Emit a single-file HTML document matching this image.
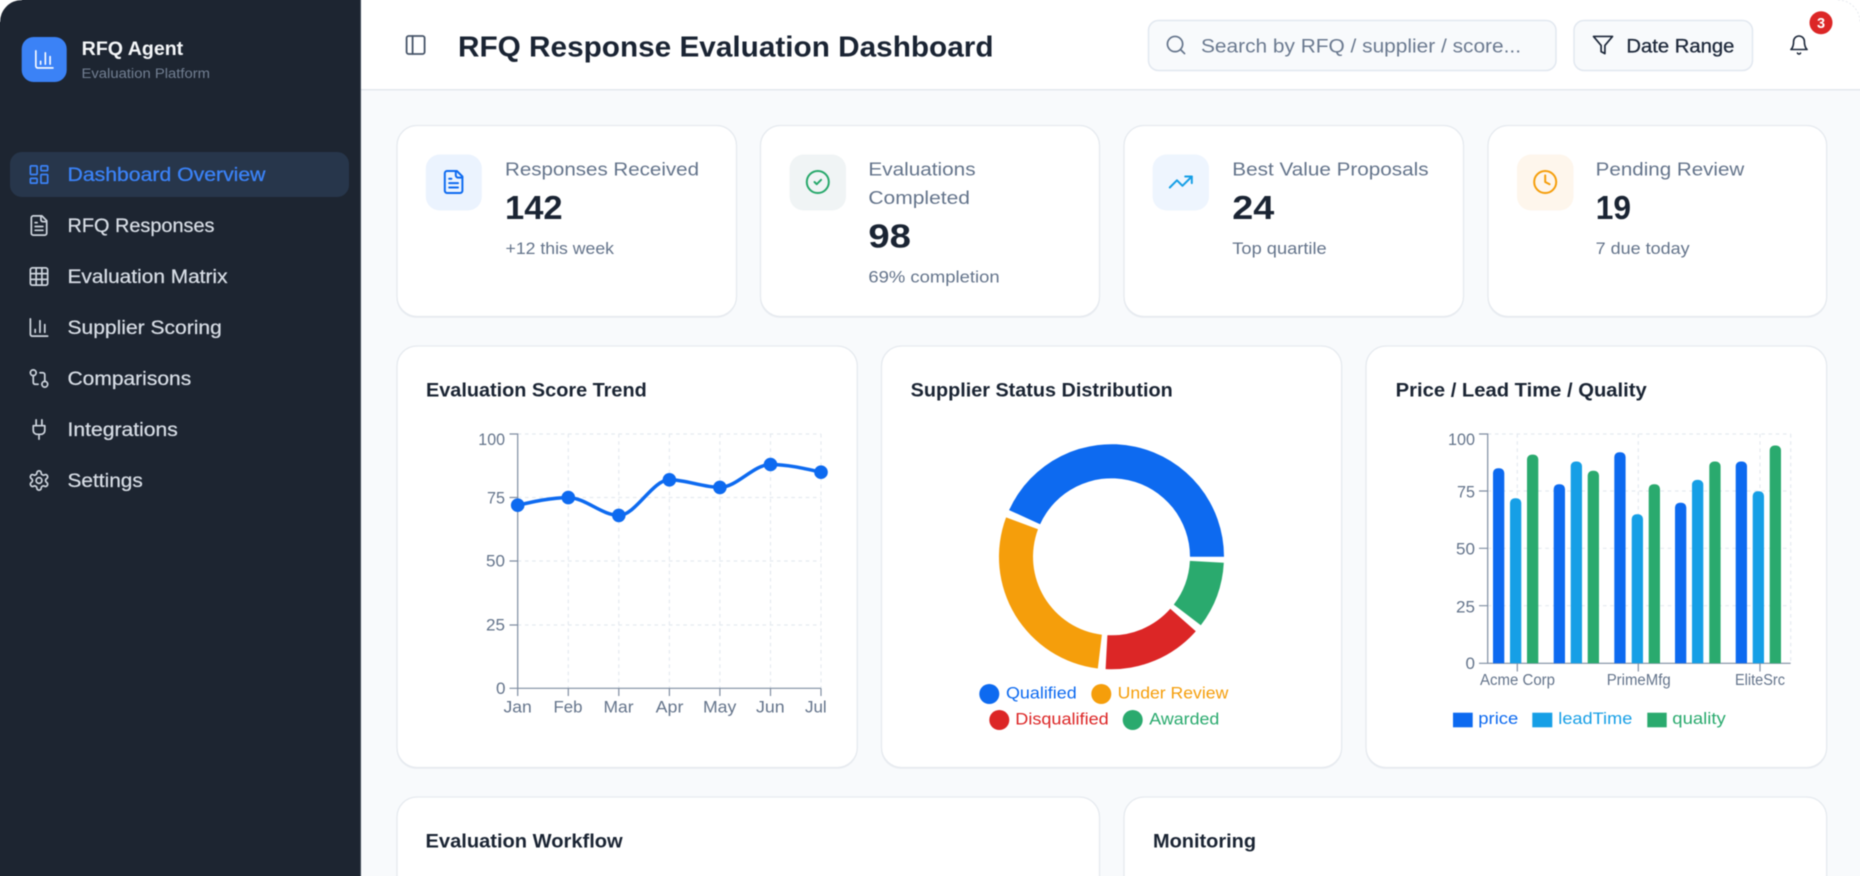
<!DOCTYPE html>
<html lang="en">
<head>
<meta charset="utf-8">
<title>RFQ Response Evaluation Dashboard</title>
<style>
html,body{margin:0;padding:0;background:#fff;width:1860px;height:876px;overflow:hidden}
#page{position:relative;width:1860px;height:876px;overflow:hidden;contain:paint}
svg{display:block;position:absolute;left:-10px;top:-10px;filter:blur(.4px)}
text{font-family:"Liberation Sans",Arial,sans-serif;white-space:pre}
.b{font-weight:700}
.ic{fill:none;stroke-linecap:round;stroke-linejoin:round;stroke-width:1.8}
.card{fill:#fff;stroke:#e6eaef;stroke-width:1.3}
.sh{fill:#eceff3}
.grid{stroke:#e5eaf0;stroke-width:1.2;stroke-dasharray:3.6 3.6;fill:none}
.axis{stroke:#7f8da1;stroke-width:1.2;fill:none}
.t{fill:#64748b;font-size:17px}
</style>
</head>
<body>
<div id="page">
<svg width="1880" height="896" viewBox="-10 -10 1880 896" xmlns="http://www.w3.org/2000/svg">
<defs>
<clipPath id="frame"><path d="M22 -20H1880V900H-20V22H0A22 22 0 0 1 22 0Z"/></clipPath>
<g id="i-chart"><path d="M3 3v16a2 2 0 0 0 2 2h16"/><path d="M18 17V9"/><path d="M13 17V5"/><path d="M8 17v-3"/></g>
<g id="i-file"><path d="M15 2H6a2 2 0 0 0-2 2v16a2 2 0 0 0 2 2h12a2 2 0 0 0 2-2V7Z"/><path d="M14 2v4a2 2 0 0 0 2 2h4"/><path d="M10 9H8"/><path d="M16 13H8"/><path d="M16 17H8"/></g>
</defs>
<g clip-path="url(#frame)">
<rect x="361" y="-20" width="1519" height="920" fill="#f8fafc"/>

<!-- Header -->
<rect x="361" y="-20" width="1519" height="109.5" fill="#fff"/>
<rect x="361" y="89" width="1519" height="1.5" fill="#e4e8ee"/>
<g class="ic" stroke="#475569" transform="translate(403.6 33)"><rect x="3" y="3" width="18" height="18" rx="2"/><path d="M9 3v18"/></g>
<text class="b" x="458" y="56.5" font-size="28.5" fill="#1a2433" textLength="535.5" lengthAdjust="spacingAndGlyphs">RFQ Response Evaluation Dashboard</text>

<rect x="1148.5" y="20.5" width="407.5" height="50" rx="10" fill="#f8fafc" stroke="#e2e8f0" stroke-width="1.5"/>
<g class="ic" stroke="#64748b" transform="translate(1164.6 33.6) scale(.95)"><circle cx="11" cy="11" r="8"/><path d="m21 21-4.3-4.3"/></g>
<text x="1201" y="52.5" font-size="19" fill="#6b7a90" textLength="320" lengthAdjust="spacingAndGlyphs">Search by RFQ / supplier / score...</text>

<rect x="1574" y="20.5" width="178.5" height="50" rx="10" fill="#f8fafc" stroke="#e2e8f0" stroke-width="1.5"/>
<g class="ic" stroke="#1e293b" transform="translate(1591.6 33.6) scale(.95)"><polygon points="22 3 2 3 10 12.46 10 19 14 21 14 12.46 22 3"/></g>
<text x="1626.4" y="52.5" font-size="19" fill="#1e293b" stroke="#1e293b" stroke-width=".3" textLength="108" lengthAdjust="spacingAndGlyphs">Date Range</text>

<g class="ic" stroke="#1e293b" transform="translate(1788.2 34.2) scale(.9)"><path d="M6 8a6 6 0 0 1 12 0c0 7 3 9 3 9H3s3-2 3-9"/><path d="M10.3 21a1.94 1.94 0 0 0 3.4 0"/></g>
<circle cx="1821" cy="22.7" r="11.5" fill="#dc2626"/>
<text class="b" x="1821" y="28" font-size="14.5" fill="#fff" text-anchor="middle">3</text>

<!-- Stat cards -->
<g>
<rect class="sh" x="396.5" y="127" width="340" height="191" rx="20"/>
<rect class="card" x="397" y="125.5" width="339.5" height="191" rx="20"/>
<rect x="425.8" y="154.5" width="56" height="56" rx="14" fill="#ebf3fe"/>
<g class="ic" stroke="#0d6af0" transform="translate(440.4 168.8) scale(1.1)"><use href="#i-file"/></g>
<text x="505" y="175.7" font-size="18.5" fill="#64748b" textLength="194" lengthAdjust="spacingAndGlyphs">Responses Received</text>
<text class="b" x="505" y="219" font-size="33.2" fill="#1a2433" textLength="57.6" lengthAdjust="spacingAndGlyphs">142</text>
<text x="505.5" y="254" font-size="16.6" fill="#64748b" textLength="108.5" lengthAdjust="spacingAndGlyphs">+12 this week</text>
</g>
<g>
<rect class="sh" x="760" y="127" width="340" height="191" rx="20"/>
<rect class="card" x="760.5" y="125.5" width="339" height="191" rx="20"/>
<rect x="789.6" y="154.5" width="56.4" height="56" rx="14" fill="#f0f4f5"/>
<g class="ic" stroke="#27a86b" transform="translate(804.6 168.8) scale(1.1)"><circle cx="12" cy="12" r="10"/><path d="m9 12 2 2 4-4"/></g>
<text x="868.4" y="175.7" font-size="18.5" fill="#64748b" textLength="107.2" lengthAdjust="spacingAndGlyphs">Evaluations</text>
<text x="868.4" y="204" font-size="18.5" fill="#64748b" textLength="101.6" lengthAdjust="spacingAndGlyphs">Completed</text>
<text class="b" x="868.4" y="247.3" font-size="33.2" fill="#1a2433" textLength="42.6" lengthAdjust="spacingAndGlyphs">98</text>
<text x="868.4" y="282.7" font-size="16.6" fill="#64748b" textLength="131.2" lengthAdjust="spacingAndGlyphs">69% completion</text>
</g>
<g>
<rect class="sh" x="1123.5" y="127" width="340" height="191" rx="20"/>
<rect class="card" x="1124" y="125.5" width="339.5" height="191" rx="20"/>
<rect x="1152.6" y="154.5" width="56.4" height="56" rx="14" fill="#eef5fe"/>
<g class="ic" stroke="#169fe6" transform="translate(1167.6 168.8) scale(1.1)"><polyline points="22 7 13.5 15.5 8.5 10.5 2 17"/><polyline points="16 7 22 7 22 13"/></g>
<text x="1232.3" y="175.7" font-size="18.5" fill="#64748b" textLength="196.3" lengthAdjust="spacingAndGlyphs">Best Value Proposals</text>
<text class="b" x="1232.3" y="219" font-size="33.2" fill="#1a2433" textLength="42" lengthAdjust="spacingAndGlyphs">24</text>
<text x="1232.3" y="254" font-size="16.6" fill="#64748b" textLength="94.4" lengthAdjust="spacingAndGlyphs">Top quartile</text>
</g>
<g>
<rect class="sh" x="1487.5" y="127" width="339.5" height="191" rx="20"/>
<rect class="card" x="1488" y="125.5" width="338.7" height="191" rx="20"/>
<rect x="1517" y="154.5" width="56.5" height="56" rx="14" fill="#fef6ec"/>
<g class="ic" stroke="#f59e0b" transform="translate(1532 168.8) scale(1.1)"><circle cx="12" cy="12" r="10"/><polyline points="12 6 12 12 16 14"/></g>
<text x="1595.7" y="175.7" font-size="18.5" fill="#64748b" textLength="148.6" lengthAdjust="spacingAndGlyphs">Pending Review</text>
<text class="b" x="1595.7" y="219" font-size="33.2" fill="#1a2433" textLength="35.3" lengthAdjust="spacingAndGlyphs">19</text>
<text x="1595.7" y="254" font-size="16.6" fill="#64748b" textLength="93.9" lengthAdjust="spacingAndGlyphs">7 due today</text>
</g>

<!-- Line chart card -->
<g>
<rect class="sh" x="396.5" y="347.5" width="461" height="421.5" rx="20"/>
<rect class="card" x="397" y="346" width="460.3" height="421.5" rx="20"/>
<text class="b" x="426" y="396.7" font-size="19" fill="#1a2433" textLength="220.7" lengthAdjust="spacingAndGlyphs">Evaluation Score Trend</text>
<path class="grid" d="M517.7 434H821M517.7 497.5H821M517.7 561H821M517.7 625H821M568.3 434V688M618.8 434V688M669.4 434V688M719.9 434V688M770.5 434V688M821 434V688"/>
<path class="axis" d="M509.5 434H517.7V688.3M509.5 497.5H517.7M509.5 561H517.7M509.5 625H517.7M509.5 688.3H821M517.7 688.3V696M568.3 688.3V696M618.8 688.3V696M669.4 688.3V696M719.9 688.3V696M770.5 688.3V696M821 688.3V696"/>
<text class="t" x="478.3" y="445" textLength="26.7" lengthAdjust="spacingAndGlyphs">100</text>
<text class="t" x="487" y="503.3" textLength="18" lengthAdjust="spacingAndGlyphs">75</text>
<text class="t" x="486" y="566.7" textLength="19" lengthAdjust="spacingAndGlyphs">50</text>
<text class="t" x="486" y="630.7" textLength="19" lengthAdjust="spacingAndGlyphs">25</text>
<text class="t" x="496" y="694" textLength="9.5" lengthAdjust="spacingAndGlyphs">0</text>
<text class="t" x="503.5" y="712.7" textLength="28.3" lengthAdjust="spacingAndGlyphs">Jan</text>
<text class="t" x="553.5" y="712.7" textLength="29" lengthAdjust="spacingAndGlyphs">Feb</text>
<text class="t" x="603.5" y="712.7" textLength="30" lengthAdjust="spacingAndGlyphs">Mar</text>
<text class="t" x="655.7" y="712.7" textLength="27.7" lengthAdjust="spacingAndGlyphs">Apr</text>
<text class="t" x="703" y="712.7" textLength="33.3" lengthAdjust="spacingAndGlyphs">May</text>
<text class="t" x="756" y="712.7" textLength="28.7" lengthAdjust="spacingAndGlyphs">Jun</text>
<text class="t" x="805" y="712.7" textLength="21.7" lengthAdjust="spacingAndGlyphs">Jul</text>
<path d="M517.7 505.2C534.5 501.4 551.5 497.6 568.3 497.6C585.1 497.6 602 515.4 618.8 515.4C635.7 515.4 652.5 479.8 669.4 479.8C686.2 479.8 703.1 487.4 719.9 487.4C736.8 487.4 753.6 464.5 770.5 464.5C787.4 464.5 804.2 468.4 821 472.2" fill="none" stroke="#0d6af0" stroke-width="3.5"/>
<g fill="#0d6af0"><circle cx="517.7" cy="505.2" r="6.8"/><circle cx="568.3" cy="497.6" r="6.8"/><circle cx="618.8" cy="515.4" r="6.8"/><circle cx="669.4" cy="479.8" r="6.8"/><circle cx="719.9" cy="487.4" r="6.8"/><circle cx="770.5" cy="464.5" r="6.8"/><circle cx="821" cy="472.2" r="6.8"/></g>
</g>

<!-- Donut card -->
<g>
<rect class="sh" x="881" y="347.5" width="461" height="421.5" rx="20"/>
<rect class="card" x="881.5" y="346" width="460.2" height="421.5" rx="20"/>
<text class="b" x="910.7" y="396.7" font-size="19" fill="#1a2433" textLength="262" lengthAdjust="spacingAndGlyphs">Supplier Status Distribution</text>
<path fill="#0d6af0" d="M1224 556.8A112.5 112.5 0 0 0 1009.1 510.1L1040.1 524.2A78.5 78.5 0 0 1 1190 556.8Z"/>
<path fill="#f59e0b" d="M1006.1 517.4A112.5 112.5 0 0 0 1097.8 668.5L1101.9 634.7A78.5 78.5 0 0 1 1038 529.3Z"/>
<path fill="#dc2626" d="M1105.6 669.1A112.5 112.5 0 0 0 1195.8 631.3L1170.3 608.8A78.5 78.5 0 0 1 1107.4 635.2Z"/>
<path fill="#2aaa6e" d="M1200.8 625.3A112.5 112.5 0 0 0 1223.8 562.7L1189.9 560.9A78.5 78.5 0 0 1 1173.8 604.6Z"/>
<circle cx="989.3" cy="694" r="10" fill="#0d6af0"/>
<text x="1006" y="698.6" font-size="17" fill="#0d6af0" textLength="70.7" lengthAdjust="spacingAndGlyphs">Qualified</text>
<circle cx="1101.3" cy="694" r="10" fill="#f59e0b"/>
<text x="1117.7" y="698.6" font-size="17" fill="#f59e0b" textLength="110.6" lengthAdjust="spacingAndGlyphs">Under Review</text>
<circle cx="999.3" cy="720" r="10" fill="#dc2626"/>
<text x="1015.3" y="724.4" font-size="17" fill="#dc2626" textLength="93.4" lengthAdjust="spacingAndGlyphs">Disqualified</text>
<circle cx="1132.7" cy="720" r="10" fill="#2aaa6e"/>
<text x="1149.3" y="724.4" font-size="17" fill="#2aaa6e" textLength="70" lengthAdjust="spacingAndGlyphs">Awarded</text>
</g>

<!-- Bar chart card -->
<g>
<rect class="sh" x="1365.5" y="347.5" width="461.5" height="421.5" rx="20"/>
<rect class="card" x="1366" y="346" width="460.7" height="421.5" rx="20"/>
<text class="b" x="1395.7" y="396.7" font-size="19" fill="#1a2433" textLength="251" lengthAdjust="spacingAndGlyphs">Price / Lead Time / Quality</text>
<path class="grid" d="M1487.7 434H1790.7M1487.7 491H1790.7M1487.7 548.3H1790.7M1487.7 605.7H1790.7M1517.3 434V663M1638.3 434V663M1760 434V663M1790.7 434V663"/>
<path class="axis" d="M1479 434H1487.7V663.3M1479 491H1487.7M1479 548.3H1487.7M1479 605.7H1487.7M1479 663.3H1790.7M1517.3 663.3V671.5M1638.3 663.3V671.5M1760 663.3V671.5"/>
<text class="t" x="1448" y="445" textLength="27" lengthAdjust="spacingAndGlyphs">100</text>
<text class="t" x="1457" y="497.3" textLength="18" lengthAdjust="spacingAndGlyphs">75</text>
<text class="t" x="1456" y="554.3" textLength="19" lengthAdjust="spacingAndGlyphs">50</text>
<text class="t" x="1456" y="612.3" textLength="19" lengthAdjust="spacingAndGlyphs">25</text>
<text class="t" x="1465.5" y="669" textLength="9.5" lengthAdjust="spacingAndGlyphs">0</text>
<text x="1480" y="685" font-size="15.5" fill="#64748b" textLength="75" lengthAdjust="spacingAndGlyphs">Acme Corp</text>
<text x="1606.7" y="685" font-size="15.5" fill="#64748b" textLength="64" lengthAdjust="spacingAndGlyphs">PrimeMfg</text>
<text x="1735" y="685" font-size="15.5" fill="#64748b" textLength="50" lengthAdjust="spacingAndGlyphs">EliteSrc</text>
<g fill="#0d6af0">
<path d="M1493 663.3V473a4.7 4.7 0 0 1 4.7-4.7h1.9a4.7 4.7 0 0 1 4.7 4.7V663.3Z"/>
<path d="M1553.7 663.3V489a4.7 4.7 0 0 1 4.7-4.7h1.9a4.7 4.7 0 0 1 4.7 4.7V663.3Z"/>
<path d="M1614.3 663.3V457a4.7 4.7 0 0 1 4.7-4.7h1.9a4.7 4.7 0 0 1 4.7 4.7V663.3Z"/>
<path d="M1675 663.3V507.5a4.7 4.7 0 0 1 4.7-4.7h1.9a4.7 4.7 0 0 1 4.7 4.7V663.3Z"/>
<path d="M1735.7 663.3V466.2a4.7 4.7 0 0 1 4.7-4.7h1.9a4.7 4.7 0 0 1 4.7 4.7V663.3Z"/>
</g>
<g fill="#169fe6">
<path d="M1510 663.3V502.9a4.7 4.7 0 0 1 4.7-4.7h1.9a4.7 4.7 0 0 1 4.7 4.7V663.3Z"/>
<path d="M1570.7 663.3V466.2a4.7 4.7 0 0 1 4.7-4.7h1.9a4.7 4.7 0 0 1 4.7 4.7V663.3Z"/>
<path d="M1631.7 663.3V519a4.7 4.7 0 0 1 4.7-4.7h1.9a4.7 4.7 0 0 1 4.7 4.7V663.3Z"/>
<path d="M1692 663.3V484.6a4.7 4.7 0 0 1 4.7-4.7h1.9a4.7 4.7 0 0 1 4.7 4.7V663.3Z"/>
<path d="M1752.7 663.3V496a4.7 4.7 0 0 1 4.7-4.7h1.9a4.7 4.7 0 0 1 4.7 4.7V663.3Z"/>
</g>
<g fill="#2aaa6e">
<path d="M1527 663.3V459.3a4.7 4.7 0 0 1 4.7-4.7h1.9a4.7 4.7 0 0 1 4.7 4.7V663.3Z"/>
<path d="M1587.7 663.3V475.4a4.7 4.7 0 0 1 4.7-4.7h1.9a4.7 4.7 0 0 1 4.7 4.7V663.3Z"/>
<path d="M1648.7 663.3V489a4.7 4.7 0 0 1 4.7-4.7h1.9a4.7 4.7 0 0 1 4.7 4.7V663.3Z"/>
<path d="M1709.3 663.3V466.2a4.7 4.7 0 0 1 4.7-4.7h1.9a4.7 4.7 0 0 1 4.7 4.7V663.3Z"/>
<path d="M1769.7 663.3V450.2a4.7 4.7 0 0 1 4.7-4.7h1.9a4.7 4.7 0 0 1 4.7 4.7V663.3Z"/>
</g>
<rect x="1453" y="712.7" width="19.7" height="14.6" fill="#0d6af0"/>
<text x="1478.3" y="724" font-size="17" fill="#0d6af0" textLength="40" lengthAdjust="spacingAndGlyphs">price</text>
<rect x="1532.3" y="712.7" width="20" height="14.6" fill="#169fe6"/>
<text x="1558.3" y="724" font-size="17" fill="#169fe6" textLength="74" lengthAdjust="spacingAndGlyphs">leadTime</text>
<rect x="1647.3" y="712.7" width="19.4" height="14.6" fill="#2aaa6e"/>
<text x="1672.3" y="724" font-size="17" fill="#2aaa6e" textLength="53.4" lengthAdjust="spacingAndGlyphs">quality</text>
</g>

<!-- Bottom cards -->
<rect class="card" x="397" y="797" width="702.5" height="120" rx="20"/>
<text class="b" x="425.5" y="847.3" font-size="19" fill="#1a2433" textLength="197.2" lengthAdjust="spacingAndGlyphs">Evaluation Workflow</text>
<rect class="card" x="1124" y="797" width="702.7" height="120" rx="20"/>
<text class="b" x="1153" y="847.3" font-size="19" fill="#1a2433" textLength="103" lengthAdjust="spacingAndGlyphs">Monitoring</text>

<!-- Sidebar -->
<rect x="-20" y="-20" width="380" height="920" fill="#1d2531"/>
<rect x="360" y="-20" width="1" height="920" fill="#3d4755"/>
<rect x="21.7" y="37" width="45" height="45" rx="12" fill="#3b82f6"/>
<g class="ic" stroke="#fff" style="stroke-width:1.7" transform="translate(33 48) scale(.95)"><use href="#i-chart"/></g>
<text class="b" x="81.7" y="55" font-size="19.5" fill="#f4f6f8" textLength="101.5" lengthAdjust="spacingAndGlyphs">RFQ Agent</text>
<text x="81.5" y="78" font-size="14.2" fill="#717e91" textLength="128.5" lengthAdjust="spacingAndGlyphs">Evaluation Platform</text>

<rect x="10" y="152" width="339" height="45" rx="12" fill="#27364b"/>
<g class="ic" stroke="#3b82f6" transform="translate(27.5 163) scale(.96)"><rect x="3" y="3" width="7" height="9" rx="1"/><rect x="14" y="3" width="7" height="5" rx="1"/><rect x="14" y="12" width="7" height="9" rx="1"/><rect x="3" y="16" width="7" height="5" rx="1"/></g>
<text x="67.5" y="181" font-size="19" fill="#3b82f6" stroke="#3b82f6" stroke-width=".3" textLength="198" lengthAdjust="spacingAndGlyphs">Dashboard Overview</text>

<g class="ic" stroke="#ccd3dc">
<g transform="translate(27.5 214) scale(.96)"><use href="#i-file"/></g>
<g transform="translate(27.5 265) scale(.96)"><rect x="3" y="3" width="18" height="18" rx="2"/><path d="M3 9h18M3 15h18M9 3v18M15 3v18"/></g>
<g transform="translate(27.5 316) scale(.96)"><use href="#i-chart"/></g>
<g transform="translate(27.5 367) scale(.96)"><circle cx="18" cy="18" r="3"/><circle cx="6" cy="6" r="3"/><path d="M13 6h3a2 2 0 0 1 2 2v7"/><path d="M11 18H8a2 2 0 0 1-2-2V9"/></g>
<g transform="translate(27.5 418) scale(.96)"><path d="M12 22v-5"/><path d="M9 8V2"/><path d="M15 8V2"/><path d="M18 8v5a4 4 0 0 1-4 4h-4a4 4 0 0 1-4-4V8Z"/></g>
<g transform="translate(27.5 469) scale(.96)"><path d="M12.22 2h-.44a2 2 0 0 0-2 2v.18a2 2 0 0 1-1 1.73l-.43.25a2 2 0 0 1-2 0l-.15-.08a2 2 0 0 0-2.73.73l-.22.38a2 2 0 0 0 .73 2.73l.15.1a2 2 0 0 1 1 1.72v.51a2 2 0 0 1-1 1.74l-.15.09a2 2 0 0 0-.73 2.73l.22.38a2 2 0 0 0 2.73.73l.15-.08a2 2 0 0 1 2 0l.43.25a2 2 0 0 1 1 1.73V20a2 2 0 0 0 2 2h.44a2 2 0 0 0 2-2v-.18a2 2 0 0 1 1-1.73l.43-.25a2 2 0 0 1 2 0l.15.08a2 2 0 0 0 2.73-.73l.22-.39a2 2 0 0 0-.73-2.73l-.15-.08a2 2 0 0 1-1-1.74v-.5a2 2 0 0 1 1-1.74l.15-.09a2 2 0 0 0 .73-2.73l-.22-.38a2 2 0 0 0-2.73-.73l-.15.08a2 2 0 0 1-2 0l-.43-.25a2 2 0 0 1-1-1.73V4a2 2 0 0 0-2-2z"/><circle cx="12" cy="12" r="3"/></g>
</g>
<g font-size="19" fill="#d7dde5" stroke="#d7dde5" stroke-width=".25">
<text x="67.5" y="232" textLength="147" lengthAdjust="spacingAndGlyphs">RFQ Responses</text>
<text x="67.5" y="283" textLength="160" lengthAdjust="spacingAndGlyphs">Evaluation Matrix</text>
<text x="67.5" y="334" textLength="154.3" lengthAdjust="spacingAndGlyphs">Supplier Scoring</text>
<text x="67.5" y="385" textLength="123.7" lengthAdjust="spacingAndGlyphs">Comparisons</text>
<text x="67.5" y="436" textLength="110.3" lengthAdjust="spacingAndGlyphs">Integrations</text>
<text x="67.5" y="487" textLength="75.3" lengthAdjust="spacingAndGlyphs">Settings</text>
</g>
</g>
<path d="M1838 0A22 22 0 0 1 1860 22" fill="none" stroke="#e6e9ee" stroke-width="1" stroke-dasharray="2 2"/>
</svg>
</div>
</body>
</html>
